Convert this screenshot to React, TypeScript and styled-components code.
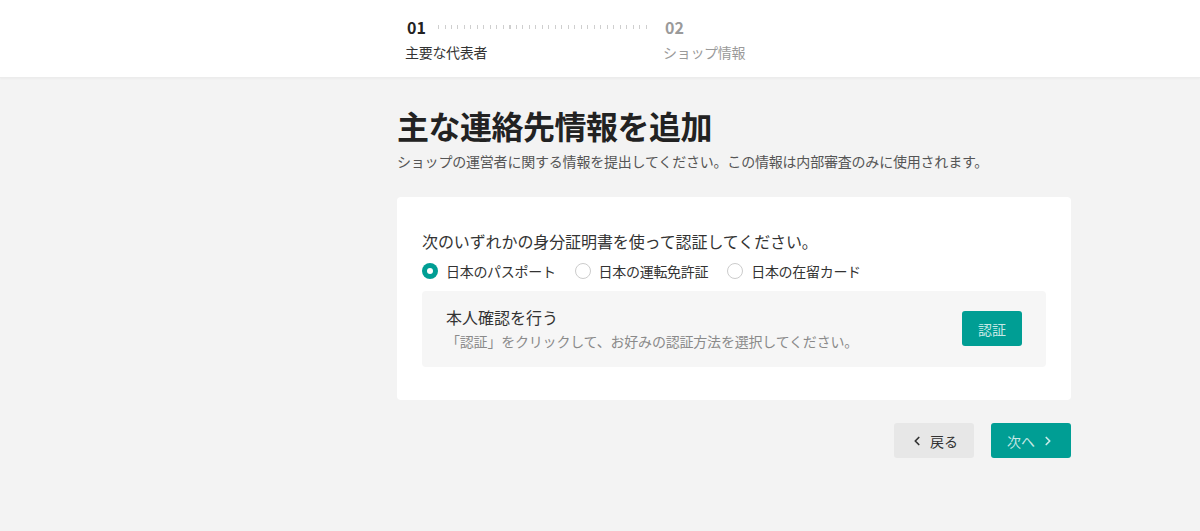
import React, { useState } from "react";
import styled, { createGlobalStyle } from "styled-components";
import { ChevronLeft, ChevronRight } from "lucide-react";

const FONT = `"Noto Sans CJK JP", "Noto Sans", sans-serif`;
const TEAL = "#009e94";

const Global = createGlobalStyle`
  html, body { margin: 0; padding: 0; background: #f3f3f3; }
  body { font-family: ${FONT}; color: #333; }
  * { box-sizing: border-box; }
`;

const Page = styled.div`
  min-height: 531px;
  background: #f3f3f3;
`;

const Header = styled.header`
  height: 78px;
  background: #fff;
  border-bottom: 1px solid #ececec;
  box-shadow: 0 1px 2px rgba(0, 0, 0, 0.03);
`;

const Stepper = styled.div`
  display: flex;
  margin-left: calc(50% - 195px);
  padding-top: 17px;
`;

const Step = styled.div<{ $grow?: boolean }>`
  display: flex;
  flex-direction: column;
  width: ${(p) => (p.$grow ? "258px" : "auto")};
`;

const StepTop = styled.div`
  display: flex;
  align-items: center;
  height: 20px;
`;

const StepNum = styled.span<{ $active?: boolean }>`
  font-size: 16px;
  font-weight: 700;
  line-height: 20px;
  padding-left: 2px;
  color: ${(p) => (p.$active ? "#222" : "#9a9a9a")};
`;

const Connector = styled.div`
  flex: 1;
  height: 4px;
  margin: 0 13px 0 12px;
  background-image: repeating-linear-gradient(
    to right,
    #cfcfcf 0,
    #cfcfcf 1px,
    transparent 1px,
    transparent 6.5px
  );
`;

const StepLabel = styled.span<{ $active?: boolean }>`
  margin-top: 5px;
  font-size: 14px;
  line-height: 20px;
  letter-spacing: -0.3px;
  color: ${(p) => (p.$active ? "#333" : "#9a9a9a")};
`;

const Main = styled.main`
  width: 674px;
  margin-left: calc(50% - 203px);
  padding-top: 26px;
  display: flex;
  flex-direction: column;
`;

const Title = styled.h1`
  margin: 0;
  font-size: 32px;
  font-weight: 700;
  line-height: 42px;
  letter-spacing: -0.5px;
  color: #222;
`;

const Subtitle = styled.p`
  margin: 5px 0 0;
  font-size: 14px;
  line-height: 20px;
  letter-spacing: -0.2px;
  color: #555;
`;

const Card = styled.section`
  margin-top: 26px;
  background: #fff;
  border-radius: 4px;
  padding: 33px 25px 33px;
`;

const Question = styled.p`
  margin: 0;
  font-size: 16px;
  line-height: 22px;
  letter-spacing: -0.1px;
  color: #333;
`;

const RadioRow = styled.div`
  margin-top: 9px;
  display: flex;
  align-items: center;
  gap: 19px;
  height: 20px;
`;

const RadioLabel = styled.label`
  display: flex;
  align-items: center;
  gap: 8px;
  font-size: 14px;
  line-height: 20px;
  letter-spacing: -0.3px;
  color: #333;
  cursor: pointer;
`;

const RadioDot = styled.span<{ $checked?: boolean }>`
  width: 16px;
  height: 16px;
  border-radius: 50%;
  flex: none;
  background: ${(p) => (p.$checked ? TEAL : "#fff")};
  border: ${(p) => (p.$checked ? "none" : "1px solid #cccccc")};
  display: flex;
  align-items: center;
  justify-content: center;
  &::after {
    content: "";
    display: ${(p) => (p.$checked ? "block" : "none")};
    width: 6px;
    height: 6px;
    border-radius: 50%;
    background: #fff;
  }
`;

const VerifyBox = styled.div`
  margin-top: 10px;
  background: #f6f6f6;
  border-radius: 4px;
  padding: 15px 24px 16px;
  display: flex;
  align-items: center;
  justify-content: space-between;
`;

const VerifyText = styled.div`
  display: flex;
  flex-direction: column;
  gap: 3px;
`;

const VerifyTitle = styled.span`
  font-size: 16px;
  line-height: 22px;
  color: #333;
`;

const VerifyDesc = styled.span`
  font-size: 14px;
  line-height: 20px;
  letter-spacing: -0.2px;
  color: #8a8a8a;
`;

const Button = styled.button<{ $primary?: boolean; $w?: number }>`
  width: ${(p) => p.$w ?? 80}px;
  height: 35px;
  border: none;
  border-radius: 3px;
  display: inline-flex;
  align-items: center;
  justify-content: center;
  gap: 6px;
  font-family: ${FONT};
  font-size: 14px;
  cursor: pointer;
  background: ${(p) => (p.$primary ? TEAL : "#e7e7e7")};
  color: ${(p) => (p.$primary ? "rgba(255,255,255,0.78)" : "#333")};
  padding: 0;
  flex: none;
`;

const Footer = styled.div`
  margin-top: 23px;
  display: flex;
  justify-content: flex-end;
  gap: 17px;
`;

const options = ["日本のパスポート", "日本の運転免許証", "日本の在留カード"];

export default function App() {
  const [sel, setSel] = useState(0);
  return (
    <Page>
      <Global />
      <Header>
        <Stepper>
          <Step $grow>
            <StepTop>
              <StepNum $active>01</StepNum>
              <Connector />
            </StepTop>
            <StepLabel $active>主要な代表者</StepLabel>
          </Step>
          <Step>
            <StepTop>
              <StepNum>02</StepNum>
            </StepTop>
            <StepLabel>ショップ情報</StepLabel>
          </Step>
        </Stepper>
      </Header>
      <Main>
        <Title>主な連絡先情報を追加</Title>
        <Subtitle>
          ショップの運営者に関する情報を提出してください。この情報は内部審査のみに使用されます。
        </Subtitle>
        <Card>
          <Question>次のいずれかの身分証明書を使って認証してください。</Question>
          <RadioRow>
            {options.map((o, i) => (
              <RadioLabel key={o} onClick={() => setSel(i)}>
                <RadioDot $checked={sel === i} />
                {o}
              </RadioLabel>
            ))}
          </RadioRow>
          <VerifyBox>
            <VerifyText>
              <VerifyTitle>本人確認を行う</VerifyTitle>
              <VerifyDesc>
                「認証」をクリックして、お好みの認証方法を選択してください。
              </VerifyDesc>
            </VerifyText>
            <Button $primary $w={60}>認証</Button>
          </VerifyBox>
        </Card>
        <Footer>
          <Button>
            <ChevronLeft size={14} strokeWidth={3} />
            戻る
          </Button>
          <Button $primary>
            次へ
            <ChevronRight size={14} strokeWidth={3} />
          </Button>
        </Footer>
      </Main>
    </Page>
  );
}
